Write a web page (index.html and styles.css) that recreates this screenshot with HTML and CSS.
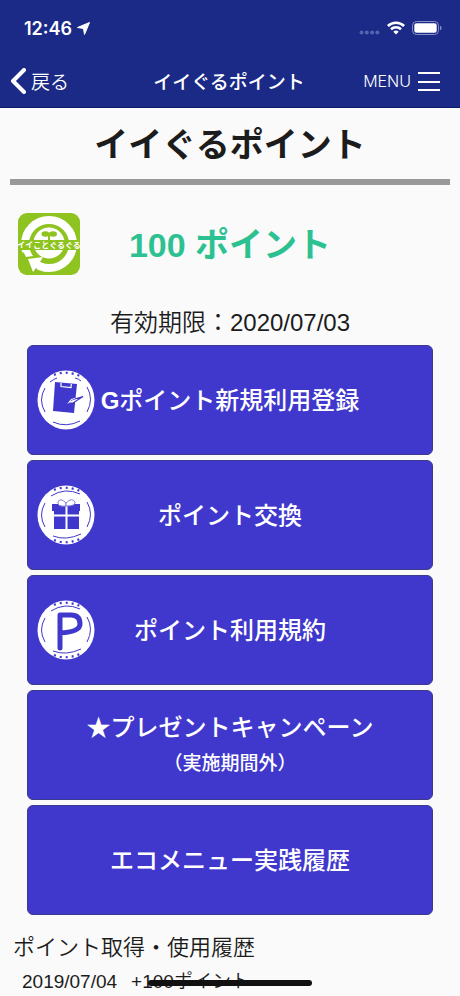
FILE: index.html
```html
<!DOCTYPE html>
<html lang="ja">
  <head>
    <meta charset="UTF-8" />
    <meta name="viewport" content="width=device-width, initial-scale=1.0" />
    <title>イイぐるポイント</title>
    <link rel="stylesheet" href="styles.css">
  </head>
  <body>
    <header class="header">
      <div class="status-bar">
        <div class="status-left">
          <span class="time">12:46</span>
          <svg width="13" height="13" viewBox="0 0 13 13" fill="#fff"><path d="M12.5 0.5 L7.5 12.5 L6.5 6.5 L0.5 5.5 Z" stroke="#fff" stroke-width="1" stroke-linejoin="round" /></svg>
        </div>
        <div class="status-right">
          <svg width="21" height="5" viewBox="0 0 21 5" fill="#5563b0">
            <circle cx="2.5" cy="2.5" r="2" /><circle cx="7.8" cy="2.5" r="2" /><circle cx="13.1" cy="2.5" r="2" /><circle cx="18.4" cy="2.5" r="2" />
          </svg>
          <svg class="wifi" width="18" height="14" viewBox="0 0 18 14" fill="none" stroke="#fff" stroke-width="2.6">
            <path d="M0.9 5 A11.6 11.6 0 0 1 17.1 5" />
            <path d="M4 8.2 A7.2 7.2 0 0 1 14 8.2" />
            <path d="M9 13.5 L6.3 10.8 A3.8 3.8 0 0 1 11.7 10.8 Z" fill="#fff" stroke="none" />
          </svg>
          <svg width="30" height="14" viewBox="0 0 30 14">
            <rect x="0.5" y="0.5" width="26" height="13" rx="4" fill="none" stroke="#8790c8" />
            <rect x="2.3" y="2.2" width="22.4" height="9.6" rx="2.2" fill="#fff" />
            <path d="M28 4.7 Q29.6 5.3 29.6 7 Q29.6 8.7 28 9.3 Z" fill="#8790c8" />
          </svg>
        </div>
      </div>
      <nav class="nav-bar">
        <a class="back" href="#">
          <svg width="16" height="26" viewBox="0 0 16 26" fill="none" stroke="#fff" stroke-width="4"><path d="M14 2 L3 13 L14 24" stroke-linejoin="round" stroke-linecap="round" /></svg>
          戻る
        </a>
        <div class="nav-title">イイぐるポイント</div>
        <button class="menu" type="button">
          MENU
          <svg width="22" height="20" viewBox="0 0 22 20" stroke="#fff" stroke-width="2"><path d="M0 2 H22 M0 11 H22 M0 19 H22" /></svg>
        </button>
      </nav>
    </header>

    <main class="content">
      <h1>イイぐるポイント</h1>

      <section class="balance">
        <svg class="app-icon" width="62" height="62" viewBox="0 0 62 62">
          <rect width="62" height="62" rx="9" fill="#8fc31f" />
          <circle cx="31" cy="31" r="24" fill="none" stroke="#fff" stroke-width="8" />
          <circle cx="31" cy="30" r="15.5" fill="#fff" />
          <path d="M1 40 L12 39 L20 46 L18 62 H8 L1 54 Z" fill="#8fc31f" />
          <path d="M5 38 L12 38 L15 43 L8 44 Z" fill="#fff" />
          <path d="M10 46 L25 44 L22 49 L34 54 L28 59 L18 55 L15 59 Z" fill="#fff" />
          <rect x="1" y="27" width="60" height="10" fill="#8fc31f" />
          <path d="M31 27 V22" stroke="#8fc31f" stroke-width="2" />
          <ellipse cx="27.5" cy="21" rx="4" ry="2.7" fill="#8fc31f" />
          <ellipse cx="35" cy="21" rx="4" ry="2.7" fill="#8fc31f" />
          <text class="app-icon-text" x="31" y="35" text-anchor="middle">イイことぐるぐる</text>
        </svg>
        <p class="points">100 ポイント</p>
      </section>

      <p class="expiry">有効期限：2020/07/03</p>

      <div class="actions">
        <button class="action" type="button">
          <svg class="badge" width="58" height="60" viewBox="0 0 58 60">
            <ellipse cx="29" cy="30" rx="28.5" ry="29.5" fill="#fff" />
            <g fill="none" stroke="#4038cc" stroke-width="1">
              <path d="M13 12 Q17 9 20 8" /><path d="M38 8 Q42 9 44 11" /><path d="M8 18 Q1 30 8 42" /><path d="M50 17 Q57 29 50 42" /><path d="M16 52 Q29 58 43 51" />
              <path d="M17 5 Q29 0 43 6" stroke-width="2.2" stroke-dasharray="2 4" />
            </g>
            <path d="M18 12 L40 14 L37 43 L16 41 Z" fill="#4038cc" />
            <path d="M24 13 L24 16.5 L34 17.5 L34.3 14" fill="none" stroke="#fff" stroke-width="1.2" />
            <path d="M31 33 L33 30.5 L46 26.5 L36 33 Z" fill="#fff" stroke="#4038cc" stroke-width="1.2" />
            <path d="M31 33.5 L34 29.5 L38 28.5" fill="none" stroke="#fff" stroke-width="1" />
          </svg>
          <span><b>G</b>ポイント新規利用登録</span>
        </button>
        <button class="action" type="button">
          <svg class="badge" width="58" height="60" viewBox="0 0 58 60">
            <ellipse cx="29" cy="30" rx="28.5" ry="29.5" fill="#fff" />
            <g fill="none" stroke="#4038cc" stroke-width="1">
              <path d="M14 11 Q28 2 43 9" /><path d="M8 18 Q1 30 8 42" /><path d="M50 17 Q57 29 50 42" /><path d="M16 51 Q29 56 44 49" />
              <path d="M17 5 Q29 0 43 6 M17 55 Q29 60 43 54" stroke-width="2.2" stroke-dasharray="2 4" />
            </g>
            <path d="M15 19 H43 V26 H42 V44 H17 V26 H15 Z" fill="#4038cc" />
            <path d="M16 30.5 H43 M29.5 18 V44" stroke="#fff" stroke-width="2" />
            <g fill="#fff" stroke="#8580dd" stroke-width="1"><path d="M29 21 Q20 22 21 17 Q23 12 29 18 Z" /><path d="M29 21 Q39 21 38 17 Q35 12 29 18 Z" /></g>
          </svg>
          <span>ポイント交換</span>
        </button>
        <button class="action" type="button">
          <svg class="badge" width="58" height="60" viewBox="0 0 58 60">
            <ellipse cx="29" cy="30" rx="28.5" ry="29.5" fill="#fff" />
            <g fill="none" stroke="#4038cc" stroke-width="1">
              <path d="M14 11 Q28 2 43 9" /><path d="M8 18 Q1 30 8 42" /><path d="M50 17 Q57 29 50 42" /><path d="M16 51 Q29 56 44 49" />
              <path d="M17 5 Q29 0 43 6 M17 55 Q29 60 43 54" stroke-width="2.2" stroke-dasharray="2 4" />
            </g>
            <path d="M23 48 V15 H34 Q43 15 43 24 Q43 32 23 33" fill="none" stroke="#4038cc" stroke-width="5" stroke-linecap="round" stroke-linejoin="round" />
          </svg>
          <span>ポイント利用規約</span>
        </button>
        <button class="action" type="button">
          <span>★プレゼントキャンペーン<small>（実施期間外）</small></span>
        </button>
        <button class="action" type="button">
          <span>エコメニュー実践履歴</span>
        </button>
      </div>

      <section class="history">
        <h2>ポイント取得・使用履歴</h2>
        <ul>
          <li><span>2019/07/04</span><span>+100ポイント</span></li>
        </ul>
      </section>
    </main>

    <div class="home-indicator"></div>
  </body>
</html>
```

FILE: styles.css
```css
* {
  box-sizing: border-box;
}

body {
  margin: 0;
  background-color: #fafafa;
  color: #1c1c1c;
  font-family: "Liberation Sans", "Noto Sans CJK JP", sans-serif;
}

h1,
h2,
p,
ul {
  margin: 0;
  padding: 0;
}

button {
  font-family: inherit;
  color: white;
  border: none;
  cursor: pointer;
}

.header {
  background-color: #1a2a86;
  color: white;
  border-bottom: 1px solid #0e1a68;
}

.status-bar {
  height: 56px;
  padding: 0 18px 0 24px;
  display: flex;
  justify-content: space-between;
  align-items: center;
}

.status-left,
.status-right {
  display: flex;
  align-items: center;
  gap: 5px;
}

.status-right svg:first-child {
  margin-top: 9px;
}

.wifi {
  margin: 0 2px;
}

.time {
  font-family: Inter, sans-serif;
  font-size: 18px;
  font-weight: 600;
}

.nav-bar {
  height: 51px;
  padding: 0 20px 2px 10px;
  display: flex;
  justify-content: space-between;
  align-items: center;
}

.back {
  flex: 1;
  display: flex;
  align-items: center;
  gap: 5px;
  color: white;
  font-size: 19px;
  font-weight: 350;
  text-decoration: none;
}

.nav-title {
  padding-left: 8px;
  font-size: 19px;
  font-weight: 500;
}

.menu {
  flex: 1;
  display: flex;
  justify-content: flex-end;
  align-items: center;
  gap: 7px;
  padding: 0;
  background: none;
  font-family: Inter, sans-serif;
  font-size: 16px;
  font-weight: 300;
}

.content {
  padding: 0 10px;
}

h1 {
  padding: 13px 0 10px;
  border-bottom: 6px solid #999;
  font-size: 34px;
  line-height: 48px;
  font-weight: 700;
  text-align: center;
}

.balance {
  padding: 28px 8px 0;
  display: grid;
  grid-template-columns: 62px 1fr 62px;
  align-items: center;
}

.app-icon-text {
  fill: white;
  font-size: 8px;
  font-weight: 700;
}

.points {
  padding-top: 2px;
  color: #2dc191;
  font-size: 34px;
  line-height: 48px;
  font-weight: 700;
  text-align: center;
}

.expiry {
  padding-top: 30px;
  font-size: 24px;
  line-height: 36px;
  font-weight: 350;
  text-align: center;
}

.actions {
  padding: 4px 17px 0;
  display: flex;
  flex-direction: column;
  gap: 5px;
}

.action {
  min-height: 110px;
  padding: 2px 10px 0;
  display: grid;
  align-items: center;
  background-color: #4038cc;
  border: 1px solid #3c3a8c;
  border-radius: 6px;
  font-size: 24px;
  line-height: 36px;
  font-weight: 500;
}

/* icon and label share one cell so the label stays centred */
.action > * {
  grid-area: 1 / 1;
}

.badge {
  margin: -2px 0 0 -1px;
}

.action small {
  display: block;
  font-size: 19px;
}

.history {
  padding: 15px 3px 0;
}

.history h2 {
  font-size: 22px;
  line-height: 36px;
  font-weight: 350;
}

.history ul {
  padding-left: 9px;
  list-style: none;
}

.history li {
  display: flex;
  gap: 14px;
  font-size: 19px;
  line-height: 32px;
  font-weight: 350;
}

.home-indicator {
  position: fixed;
  bottom: 10px;
  left: 50%;
  width: 164px;
  height: 6px;
  margin-left: -82px;
  border-radius: 3px;
  background-color: #111;
}
```
